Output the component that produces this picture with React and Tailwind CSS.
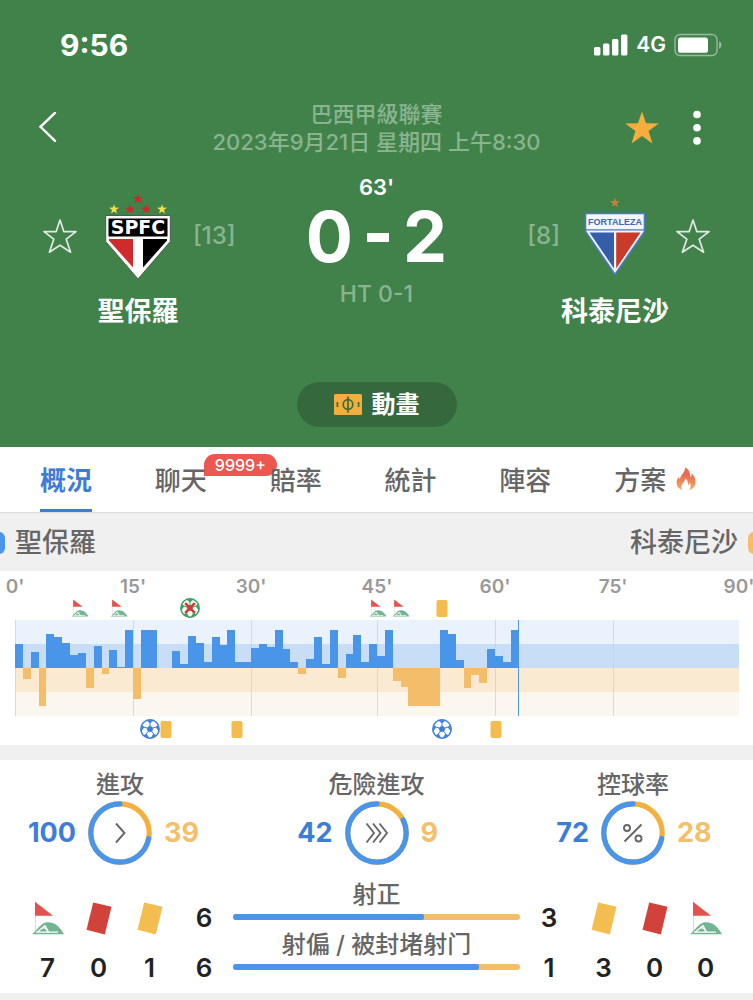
import { useState } from 'react'

// minute slots of the match, 45+1 included
const SLOTS = 92
const NOW = 64

// positive = home pressure, negative = away pressure
const MOMENTUM = [
  24, -11, 16, -38, 34, 31, 25, 13, 15, -20, 22, -6, 18, 1, 38, -31,
  38, 38, 0, 0, 17, 4, 32, 25, 6, 31, 23, 38, 6, 6, 20, 24,
  21, 38, 19, 6, -6, 9, 31, 4, 38, -10, 14, 33, 6, 24, 12, 38,
  -13, -19, -38, -38, -38, -38, 38, 34, 8, -20, -7, -15, 19, 12, 6, 38,
]

const MINUTES = [
  { label: "0'", slot: 0 },
  { label: "15'", slot: 15 },
  { label: "30'", slot: 30 },
  { label: "45'", slot: 46 },
  { label: "60'", slot: 61 },
  { label: "75'", slot: 76 },
  { label: "90'", slot: 92 },
]

const HOME_EVENTS = [
  { type: 'corner', slot: 8.2 },
  { type: 'corner', slot: 13.2 },
  { type: 'disallowed', slot: 22.2 },
  { type: 'corner', slot: 46.1 },
  { type: 'corner', slot: 49.1 },
  { type: 'yellow', slot: 54.2 },
]

const AWAY_EVENTS = [
  { type: 'goal', slot: 17.1 },
  { type: 'yellow', slot: 19.2 },
  { type: 'yellow', slot: 28.2 },
  { type: 'goal', slot: 54.2 },
  { type: 'yellow', slot: 61.1 },
]

const TABS = ['概況', '聊天', '賠率', '統計', '陣容', '方案']

const STAR = '17,0.5 21,12.2 33.8,12.4 23.6,20 27.4,32.4 17,25.1 6.6,32.4 10.4,20 0.2,12.4 13,12.2'

function StarOutline() {
  return (
    <svg viewBox="0 0 34 34" className="size-[34px]" fill="none" stroke="#e3e8e3" strokeWidth="1.7" strokeLinejoin="round">
      <polygon points="17,1 20.8,12.6 33,12.6 23.2,20.2 27.6,33.2 17,26.2 6.4,33.2 10.8,20.2 1,12.6 13.2,12.6" />
    </svg>
  )
}

function SmallStar({ x, y, fill, size = 10 }) {
  return (
    <g transform={`translate(${x - size / 2} ${y - size / 2}) scale(${size / 34})`}>
      <polygon points={STAR} fill={fill} />
    </g>
  )
}

function SaoPauloCrest() {
  return (
    <svg viewBox="0 0 66 86" className="h-[86px] w-[66px]" role="img" aria-label="SPFC">
      <SmallStar x={33} y={5.5} fill="#d3262c" size={11} />
      <SmallStar x={9} y={16} fill="#f5de45" />
      <SmallStar x={25} y={16} fill="#d3262c" />
      <SmallStar x={41} y={16} fill="#d3262c" />
      <SmallStar x={57} y={16} fill="#f5de45" />
      <path d="M.7 22.5H65.3V48.5L33 86 .7 48.5Z" fill="#fff" stroke="#4b5a4d" strokeWidth="1" />
      <rect x="3.5" y="25.5" width="59" height="18" fill="#000" />
      <text x="33" y="41" textAnchor="middle" fill="#fff" fontFamily="DejaVu Sans" fontWeight="700" fontSize="19">SPFC</text>
      <path d="M4 46H28V74.5L4 47.5Z" fill="#d12a2c" />
      <path d="M38 46H62V47.5L38 74.5Z" fill="#000" />
    </svg>
  )
}

function FortalezaCrest() {
  return (
    <svg viewBox="0 0 66 86" className="h-[86px] w-[66px]" role="img" aria-label="FORTALEZA">
      <SmallStar x={33} y={9.5} fill="#c5803f" />
      <path d="M3.5 20.5H62.5V38.5L33 81.5 3.5 38.5Z" fill="#f4f6fa" stroke="#4a79c4" strokeWidth="1.6" strokeLinejoin="round" />
      <path d="M4 36.8H62" stroke="#4a79c4" strokeWidth="1.2" />
      <text x="33" y="32" textAnchor="middle" fill="#3d68ae" fontFamily="Liberation Sans" fontWeight="700" fontSize="9">FORTALEZA</text>
      <path d="M7.5 39.5H32V75.5Z" fill="#345fa8" />
      <path d="M34.2 39.5H58.5L34.2 75.5Z" fill="#c93b2a" />
    </svg>
  )
}

function CornerIcon({ className }) {
  return (
    <svg viewBox="0 0 32 34" className={className} fill="none">
      <path d="M3.5 1V32" stroke="#dcdcdc" strokeWidth="1.2" />
      <path d="M3 .8 21 14.8H3Z" fill="#e4524e" />
      <path d="M0 33.2C4 30.4 9 21.4 15 21.2 24 20.8 28 26.5 32.2 33.2Z" fill="#72b590" />
      <path d="M4 31.2H26M5.5 31 13 24.5M10 27C13.5 26.5 15.5 28 15.5 31.2M13 24.5 16.5 31" stroke="#fff" strokeWidth="1.3" />
    </svg>
  )
}

function TiltedCard({ color }) {
  return (
    <svg viewBox="0 0 26 33" className="h-[33px] w-[26px]">
      <path d="M7.2.5 25.5 4.8 18.8 32.5.5 27.8Z" fill={color} />
    </svg>
  )
}

function Ball({ color, crossed }) {
  return (
    <svg viewBox="0 0 20 20" className="size-5" fill="none">
      <circle cx="10" cy="10" r="9.2" fill="#fff" stroke={color} strokeWidth="1.4" />
      <path
        d="M10 6.8 13 9 11.9 12.6H8.1L7 9ZM6.8 1.4H13.2L10 4ZM18.2 6.4 19 12.2 15.9 8.1ZM16 16.6 11.2 19 13.6 14.9ZM4 16.6 8.8 19 6.4 14.9ZM1.8 6.4 1 12.2 4.1 8.1Z"
        fill={color}
        stroke={color}
        strokeWidth=".7"
        strokeLinejoin="round"
      />
      <path d="M10 6.8V3.5M13 9 16.2 8M11.9 12.6 13.8 15.2M8.1 12.6 6.2 15.2M7 9 3.8 8" stroke={color} strokeWidth="1" />
      {crossed && <path d="M5.2 5.2 14.8 14.8M14.8 5.2 5.2 14.8" stroke="#d8392f" strokeWidth="2.6" />}
    </svg>
  )
}

function EventIcon({ type }) {
  if (type === 'corner') return <CornerIcon className="h-[18px] w-[17px]" />
  if (type === 'goal') return <Ball color="#3b7edb" />
  if (type === 'disallowed') return <Ball color="#3a9d5d" crossed />
  return <span className="block h-[17px] w-[11px] rounded-xs bg-[#f3bc4c]" />
}

function EventRow({ events }) {
  return (
    <div className="relative h-5">
      {events.map(e => (
        <span
          key={e.slot}
          className="absolute inset-y-0 flex -translate-x-1/2 items-center"
          style={{ left: `${(e.slot / SLOTS) * 100}%` }}
        >
          <EventIcon type={e.type} />
        </span>
      ))}
    </div>
  )
}

function MomentumChart() {
  return (
    <svg viewBox={`0 0 ${SLOTS} 96`} preserveAspectRatio="none" className="mt-0.5 block h-24 w-full" shapeRendering="crispEdges">
      <rect width={SLOTS} height="24" fill="#eaf3fd" />
      <rect y="24" width={SLOTS} height="24" fill="#c7def6" />
      <rect y="48" width={SLOTS} height="24" fill="#fbead2" />
      <rect y="72" width={SLOTS} height="24" fill="#fcf7ee" />
      {MINUTES.map(m => (
        <path key={m.slot} d={`M${m.slot} 0V96`} stroke="#c9ced4" strokeOpacity=".7" strokeWidth="1" vectorEffect="non-scaling-stroke" />
      ))}
      {MOMENTUM.map((v, i) => (
        <rect
          key={i}
          x={i}
          y={v > 0 ? 48 - v : 48}
          width="1"
          height={Math.abs(v)}
          fill={v > 0 ? '#4995ea' : '#f4bd6a'}
        />
      ))}
      <path d={`M${NOW} 0V96`} stroke="#4f93d8" strokeWidth="1" vectorEffect="non-scaling-stroke" />
    </svg>
  )
}

function Donut({ title, home, away, children }) {
  const share = (away / (home + away)) * 100
  return (
    <div className="flex w-[188px] flex-col items-center">
      <h3 className="text-2xl leading-8 font-medium text-[#666]">{title}</h3>
      <div className="grid w-full grid-cols-[1fr_64px_1fr] items-center gap-3 text-[27px] font-bold">
        <span className="text-right text-[#3d7dd8]">{home}</span>
        <svg viewBox="0 0 64 64" className="size-16" fill="none">
          <circle cx="32" cy="32" r="29.2" stroke="#f4b03e" strokeWidth="5.2" />
          <circle
            cx="32"
            cy="32"
            r="29.2"
            stroke="#4995ea"
            strokeWidth="5.2"
            strokeLinecap="round"
            pathLength="100"
            strokeDasharray={`${100 - share} ${share}`}
            strokeDashoffset={-share}
            transform="rotate(-90 32 32)"
          />
          <g stroke="#666" strokeWidth="1.9">{children}</g>
        </svg>
        <span className="text-left text-[#f5be69]">{away}</span>
      </div>
    </div>
  )
}

function ShotBar({ title, home, away }) {
  return (
    <div className="h-[50px]">
      <h3 className="text-center text-2xl leading-8 font-medium whitespace-nowrap text-[#666]">{title}</h3>
      <div className="mt-[3px] h-1.5 overflow-hidden rounded-full bg-[#f5bd69]">
        <div className="h-full rounded-r-xs bg-[#4995ea]" style={{ width: `${(home / (home + away)) * 100}%` }} />
      </div>
    </div>
  )
}

function Count({ icon, value }) {
  return (
    <div className="flex w-[51px] flex-col items-center">
      <div className="flex h-[50px] items-center">{icon}</div>
      <span className="leading-[50px]">{value}</span>
    </div>
  )
}

function Team({ name, crest }) {
  return (
    <div className="flex w-[110px] flex-col items-center pt-5">
      {crest}
      <h2 className="mt-[13px] text-[27px] leading-10 font-semibold whitespace-nowrap">{name}</h2>
    </div>
  )
}

function Header() {
  return (
    <header className="bg-[#41824b] pb-5 text-white">
      <div className="flex h-[90px] items-center justify-between pr-[31px] pl-[60px]">
        <span className="text-[30px] font-bold">9:56</span>
        <div className="flex items-center gap-2">
          <svg viewBox="0 0 34 22" className="h-[22px] w-[34px]" fill="#fff">
            <rect x="0" y="13" width="6.4" height="8.5" rx="1.5" />
            <rect x="9" y="9.5" width="6.4" height="12" rx="1.5" />
            <rect x="18" y="5" width="6.4" height="16.5" rx="1.5" />
            <rect x="27" y="0.5" width="6.4" height="21" rx="1.5" />
          </svg>
          <span className="text-[21px] font-semibold">4G</span>
          <svg viewBox="0 0 48 24" className="h-6 w-12" fill="none">
            <rect x="1" y="1.5" width="42" height="21" rx="5" stroke="#fff" strokeOpacity=".45" strokeWidth="1.4" />
            <rect x="4" y="4.4" width="30" height="15.4" rx="2.6" fill="#fff" />
            <path d="M45.2 8.3C48 9.5 48 14.5 45.2 15.7Z" fill="#fff" fillOpacity=".5" />
          </svg>
        </div>
      </div>

      <div className="grid grid-cols-[1fr_auto_1fr] items-center pt-[10px]">
        <button type="button" aria-label="返回" className="ml-[38px] w-5">
          <svg viewBox="0 0 20 32" className="h-8 w-5" fill="none" stroke="#fff" strokeWidth="2.4" strokeLinecap="round">
            <path d="M17 .8 2.5 14.8 17 28.8" />
          </svg>
        </button>
        <div className="text-center text-[22px] leading-7 font-medium text-[#8ab490]">
          <h1>巴西甲級聯賽</h1>
          <p>2023年9月21日 星期四 上午8:30</p>
        </div>
        <div className="flex items-center justify-end gap-[32px] pr-[50px]">
          <button type="button" aria-label="收藏">
            <svg viewBox="0 0 34 34" className="size-[34px]">
              <polygon points={STAR} fill="#f4ae3d" />
            </svg>
          </button>
          <button type="button" aria-label="更多">
            <svg viewBox="0 0 12 36" className="h-9 w-3" fill="#fff">
              <circle cx="6" cy="4.5" r="3.8" />
              <circle cx="6" cy="17.7" r="3.8" />
              <circle cx="6" cy="30.9" r="3.8" />
            </svg>
          </button>
        </div>
      </div>

      <div className="mt-[17px] flex items-start px-[43px]">
        <button type="button" aria-label="關注聖保羅" className="mt-5 flex h-[86px] items-center">
          <StarOutline />
        </button>
        <div className="ml-1.5">
          <Team name="聖保羅" crest={<SaoPauloCrest />} />
        </div>
        <span className="mt-5 w-12 text-2xl leading-[86px] font-medium text-[#8ab490]">[13]</span>
        <div className="flex-1 text-center">
          <p className="text-[22px] leading-7 font-semibold">63'</p>
          <p className="flex items-center justify-center gap-[14px] text-[70px] leading-[72px] font-bold">
            <span>0</span>
            <span className="h-[9px] w-[22px] bg-white" aria-label="-" />
            <span>2</span>
          </p>
          <p className="mt-[7px] text-[23px] leading-7 font-medium text-[#8ab490]">HT 0-1</p>
        </div>
        <span className="mt-5 w-12 text-right text-2xl leading-[86px] font-medium text-[#8ab490]">[8]</span>
        <div className="mr-1.5">
          <Team name="科泰尼沙" crest={<FortalezaCrest />} />
        </div>
        <button type="button" aria-label="關注科泰尼沙" className="mt-5 flex h-[86px] items-center">
          <StarOutline />
        </button>
      </div>

      <button
        type="button"
        className="mx-auto mt-[50px] flex h-[45px] items-center gap-[10px] rounded-full bg-[#35683d] px-[37px] text-2xl font-semibold"
      >
        <svg viewBox="0 0 28 21" className="h-[21px] w-7" fill="none">
          <rect width="28" height="21" rx="1.5" fill="#f4ae3d" />
          <circle cx="14" cy="10.5" r="4.8" stroke="#3b6c3a" strokeWidth="1.7" />
          <path d="M14 2.5V18.5M3.4 8V13M24.6 8V13" stroke="#3b6c3a" strokeWidth="1.7" />
        </svg>
        動畫
      </button>
    </header>
  )
}

function Flame() {
  return (
    <svg viewBox="0 0 20 24" className="mb-1 ml-2.5 h-6 w-5">
      <defs>
        <linearGradient id="flame" x1="0" y1="0" x2="0" y2="1">
          <stop offset=".3" stopColor="#ec6a52" />
          <stop offset="1" stopColor="#f6ad62" />
        </linearGradient>
      </defs>
      <path
        d="M9 .5C13.5 2.5 14.2 6.5 14.4 10 15.6 9 15.8 7.6 15.7 6.2 18.5 9 19.8 12 19.5 15.5 19.2 19.3 17 22 13.6 23.3 15 20.5 15.2 17.8 13.6 15.6 13.2 17 12.7 17.7 12 18.2 12.3 15.5 11.5 12.8 9.3 11.4 9.2 14.8 5.5 16.8 5.4 19.6 5.3 21.2 5.8 22.4 6.6 23.3 2.8 22 .7 19.4.6 16 .5 13.5 1.5 11.5 2.7 9.9 2.9 11 3.3 11.7 4 12.2 4.2 8 9.5 5.5 9 .5Z"
        fill="url(#flame)"
      />
    </svg>
  )
}

function Tabs() {
  const [active, setActive] = useState('概況')

  return (
    <nav className="grid h-[65px] grid-cols-6 bg-white pr-6 pl-10">
      {TABS.map(tab => (
        <div key={tab} className="relative flex items-stretch">
          {tab === '聊天' && (
            <span className="absolute top-[7px] left-[49px] flex h-[22px] w-[73px] items-center justify-center rounded-full rounded-bl-none bg-[#ee5650] text-base font-medium text-white">
              9999+
            </span>
          )}
          <button
            type="button"
            onClick={() => setActive(tab)}
            className={
              active === tab
                ? 'relative flex items-center border-b-3 border-[#3d7dd8] pt-[5px] text-[26px] font-semibold text-[#3d7dd8]'
                : 'relative flex items-center border-b-3 border-transparent pt-[5px] text-[26px] font-medium text-[#666]'
            }
          >
            {tab}
            {tab === '方案' && <Flame />}
          </button>
        </div>
      ))}
    </nav>
  )
}

export default function App() {
  return (
    <div className="min-h-screen overflow-hidden bg-[#f0f0f0] font-['Inter','Noto_Sans_CJK_TC',sans-serif]">
      <Header />
      <Tabs />

      <div className="flex h-[59px] items-center justify-between border-t border-[#dcdcdc] pt-0.5 text-[27px] font-medium text-[#666]">
        <div className="-ml-[17px] flex items-center gap-[10px]">
          <span className="size-[22px] rounded-md bg-[#4995ea]" />
          聖保羅
        </div>
        <div className="-mr-[17px] flex items-center gap-[10px]">
          科泰尼沙
          <span className="size-[22px] rounded-md bg-[#f5bd69]" />
        </div>
      </div>

      <section className="bg-white pt-[5px] pr-[14px] pb-1.5 pl-[15px]">
        <div className="relative h-[22px] text-[19px] leading-[22px] font-semibold text-[#999]">
          {MINUTES.map(m => (
            <span key={m.slot} className="absolute -translate-x-1/2" style={{ left: `${(m.slot / SLOTS) * 100}%` }}>
              {m.label}
            </span>
          ))}
        </div>
        <EventRow events={HOME_EVENTS} />
        <MomentumChart />
        <div className="mt-[3px]">
          <EventRow events={AWAY_EVENTS} />
        </div>
      </section>

      <section className="mt-[15px] bg-white pt-[9px]">
        <div className="flex justify-between px-[26px]">
          <Donut title="進攻" home={100} away={39}>
            <path d="M28 22.5 36.5 32 28 41.5" />
          </Donut>
          <Donut title="危險進攻" home={42} away={9}>
            <path d="M21.5 22.5 29 32 21.5 41.5M28 22.5 35.5 32 28 41.5M34.5 22.5 42 32 34.5 41.5" />
          </Donut>
          <Donut title="控球率" home={72} away={28}>
            <path d="M40.5 23.5 23.5 40.5" />
            <circle cx="26" cy="27" r="3" />
            <circle cx="37.5" cy="37.5" r="3" />
          </Donut>
        </div>

        <div className="mt-[14px] flex px-[22px] text-[26px] font-semibold text-[#222]">
          <div className="flex pt-[14px]">
            <Count icon={<CornerIcon className="h-[34px] w-8" />} value={7} />
            <Count icon={<TiltedCard color="#d0423a" />} value={0} />
            <Count icon={<TiltedCard color="#f3bd50" />} value={1} />
          </div>
          <div className="w-[58px] pt-[14px] text-center leading-[50px]">
            <p>6</p>
            <p>6</p>
          </div>
          <div className="flex-1 font-normal">
            <ShotBar title="射正" home={6} away={3} />
            <ShotBar title="射偏 / 被封堵射门" home={6} away={1} />
          </div>
          <div className="w-[58px] pt-[14px] text-center leading-[50px]">
            <p>3</p>
            <p>1</p>
          </div>
          <div className="flex pt-[14px]">
            <Count icon={<TiltedCard color="#f3bd50" />} value={3} />
            <Count icon={<TiltedCard color="#d0423a" />} value={0} />
            <Count icon={<CornerIcon className="h-[34px] w-8" />} value={0} />
          </div>
        </div>
      </section>
    </div>
  )
}
